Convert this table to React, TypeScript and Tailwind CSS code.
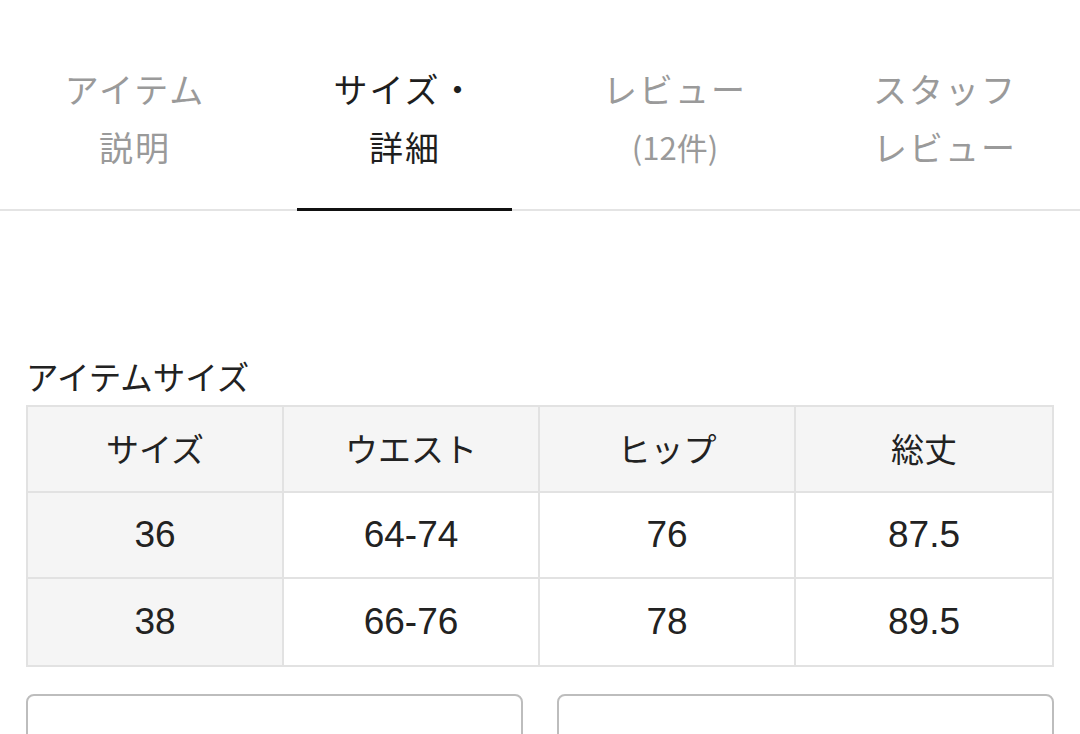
import React from "react";

const tabs = [
  { l1: "アイテム", l2: "説明", active: false, small: false },
  { l1: "サイズ・", l2: "詳細", active: true, small: false },
  { l1: "レビュー", l2: "(12件)", active: false, small: true },
  { l1: "スタッフ", l2: "レビュー", active: false, small: false },
];

const rows = [
  ["サイズ", "ウエスト", "ヒップ", "総丈"],
  ["36", "64-74", "76", "87.5"],
  ["38", "66-76", "78", "89.5"],
];

export default function App() {
  return (
    <div
      className="w-[1080px] h-[734px] overflow-hidden bg-white"
      style={{ fontFamily: '"Noto Sans CJK JP", "Noto Sans", sans-serif' }}
    >
      <div className="h-[50px]" />
      <div className="flex border-b-2 border-[#e4e4e4]">
        {tabs.map((t, i) => (
          <div key={i} className="w-[270px] flex flex-col items-center relative h-[159px] pt-[10px]">
            <div
              className={`text-[34px] leading-[58px] tracking-[2px] ${t.active ? "text-[#1e1e1e]" : "text-[#9a9a9a]"}`}
            >
              {t.l1}
            </div>
            <div
              className={`leading-[58px] ${t.small ? "text-[31px]" : "text-[34px] tracking-[2px]"} ${t.active ? "text-[#1e1e1e]" : "text-[#9a9a9a]"}`}
            >
              {t.l2}
            </div>
            {t.active && (
              <div className="absolute left-[27px] right-[28px] bottom-[-2px] h-[3px] bg-[#111]" />
            )}
          </div>
        ))}
      </div>
      <div className="px-[26px] pt-[142px]">
        <div className="text-[32.5px] leading-[46px] text-[#222] mb-[6px]">アイテムサイズ</div>
        <div className="grid grid-cols-4 border-2 border-[#e2e2e2] w-[1028px]">
          {rows.map((r, ri) =>
            r.map((c, ci) => (
              <div
                key={`${ri}-${ci}`}
                className={`h-[86px] flex items-center justify-center text-[#222] ${
                  ri === 0 ? "text-[33px]" : "text-[37px]"
                } ${ri === 0 || ci === 0 ? "bg-[#f5f5f5]" : "bg-white"} ${
                  ci < 3 ? "border-r-2 border-[#e2e2e2]" : ""
                } ${ri < 2 ? "border-b-2 border-[#e2e2e2]" : ""}`}
                style={{ fontFamily: ri === 0 ? undefined : '"Liberation Sans", "Noto Sans CJK JP", sans-serif' }}
              >
                {c}
              </div>
            ))
          )}
        </div>
        <div className="flex gap-[34px] mt-[27px]">
          <div className="w-[497px] h-[80px] border-2 border-[#bdbdbd] rounded-[8px]" />
          <div className="w-[497px] h-[80px] border-2 border-[#bdbdbd] rounded-[8px]" />
        </div>
      </div>
    </div>
  );
}
